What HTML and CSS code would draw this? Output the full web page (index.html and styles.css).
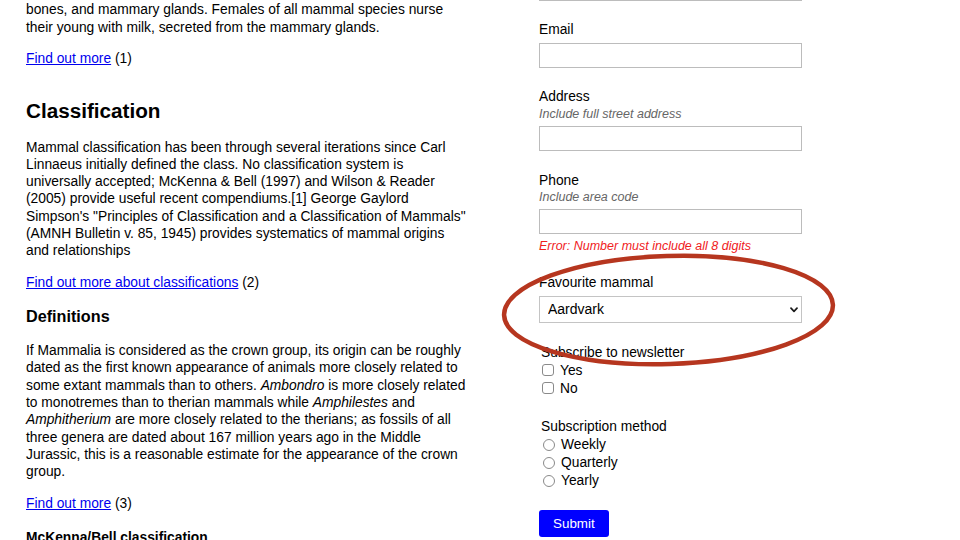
FILE: index.html
```html
<!DOCTYPE html>
<html lang="en">
<head>
<meta charset="utf-8">
<title>Mammals</title>
<link rel="stylesheet" href="styles.css">
</head>
<body>
<div class="page">
  <main class="article">
    <p class="lead"><span class="lead-cut">reptiles and birds by the possession of hair, three middle ear</span>bones, and mammary glands. Females of all mammal species nurse their young with milk, secreted from the mammary glands.</p>
    <p><a href="#">Find out more</a> (1)</p>
    <h2>Classification</h2>
    <p>Mammal classification has been through several iterations since Carl Linnaeus initially defined the class. No classification system is universally accepted; McKenna &amp; Bell (1997) and Wilson &amp; Reader (2005) provide useful recent compendiums.[1] George Gaylord Simpson's "Principles of Classification and a Classification of Mammals" (AMNH Bulletin v. 85, 1945) provides systematics of mammal origins and relationships</p>
    <p><a href="#">Find out more about classifications</a> (2)</p>
    <h3>Definitions</h3>
    <p>If Mammalia is considered as the crown group, its origin can be roughly dated as the first known appearance of animals more closely related to some extant mammals than to others. <em>Ambondro</em> is more closely related to monotremes than to therian mammals while <em>Amphilestes</em> and <em>Amphitherium</em> are more closely related to the therians; as fossils of all three genera are dated about 167 million years ago in the Middle Jurassic, this is a reasonable estimate for the appearance of the crown group.</p>
    <p><a href="#">Find out more</a> (3)</p>
    <h4>McKenna/Bell classification</h4>
  </main>

  <form class="form">
    <div class="field">
      <input class="text-input" type="text" aria-label="Name">
    </div>
    <div class="field">
      <label class="label">Email</label>
      <input class="text-input" type="email">
    </div>
    <div class="field field-address">
      <label class="label">Address</label>
      <span class="hint">Include full street address</span>
      <input class="text-input after-hint" type="text">
    </div>
    <div class="field field-phone">
      <label class="label">Phone</label>
      <span class="hint">Include area code</span>
      <input class="text-input after-hint" type="tel">
      <span class="error">Error: Number must include all 8 digits</span>
    </div>
    <div class="field field-select">
      <label class="label">Favourite mammal</label>
      <div class="select-wrap">
        <select class="select">
          <option>Aardvark</option>
          <option>Badger</option>
          <option>Capybara</option>
        </select>
        <svg class="chevron" width="8" height="6" viewBox="0 0 8 6"><path d="M1 1.2 L4 4.3 L7 1.2" fill="none" stroke="#1a1a1a" stroke-width="1.7" stroke-linecap="round" stroke-linejoin="round"/></svg>
      </div>
    </div>
    <div class="choices">
      <span class="legend">Subscribe to newsletter</span>
      <label class="option"><input class="check" type="checkbox">Yes</label>
      <label class="option"><input class="check" type="checkbox">No</label>
    </div>
    <div class="choices choices-last">
      <span class="legend">Subscription method</span>
      <label class="option"><input class="radio" type="radio" name="m">Weekly</label>
      <label class="option"><input class="radio" type="radio" name="m">Quarterly</label>
      <label class="option"><input class="radio" type="radio" name="m">Yearly</label>
    </div>
    <div class="actions">
      <button class="submit" type="button">Submit</button>
    </div>
  </form>

  <svg class="annotation" width="960" height="540" viewBox="0 0 960 540">
    <ellipse cx="668.5" cy="310" rx="164.5" ry="54" transform="rotate(-1.8 668.5 310)" fill="none" stroke="#b6361f" stroke-width="4.5"/>
  </svg>
</div>
</body>
</html>
```

FILE: styles.css
```css
html, body {
  margin: 0;
  padding: 0;
  background: #fff;
}

body {
  font-family: "Liberation Sans", Arial, Helvetica, sans-serif;
  font-size: 13.8px;
  line-height: 17.3px;
  color: #000;
  overflow: hidden;
}

.page {
  position: relative;
  width: 960px;
  height: 540px;
  overflow: hidden;
  display: grid;
  grid-template-columns: 442px 263px;
  column-gap: 71px;
  padding-left: 26px;
  align-items: start;
}

.article {
  margin-top: -15.95px;
}

.article p {
  margin: 14px 0;
}

.article .lead {
  margin-top: 0;
}

.lead-cut {
  display: block;
  white-space: nowrap;
}

.article a {
  color: #0000ee;
  text-decoration: underline;
}

.article h2 {
  font-size: 20.7px;
  line-height: 26px;
  font-weight: bold;
  margin: 31px 0 14.3px;
}

.article h3 {
  font-size: 16.2px;
  line-height: 20.2px;
  font-weight: bold;
  margin: 15px 0 16px;
}

.article h4 {
  font-size: 13.8px;
  line-height: 17.3px;
  font-weight: bold;
  margin: 17px 0;
}

.form {
  margin: -24px 0 0;
  display: flex;
  flex-direction: column;
}

.field {
  display: flex;
  flex-direction: column;
  margin-bottom: 20px;
}

.field-address {
  margin-bottom: 21px;
}

.field-phone {
  margin-bottom: 18px;
}

.field-select {
  margin-bottom: 21px;
}

.label {
  display: block;
}

.hint {
  display: block;
  font-size: 12.5px;
  font-style: italic;
  color: #666;
}

.text-input {
  box-sizing: border-box;
  width: 263px;
  height: 25px;
  margin: 5px 0 0;
  padding: 0 6px;
  border: 1px solid #bcbcbc;
  border-radius: 0;
  background: #fff;
  font: inherit;
}

.field:first-child .text-input {
  margin-top: 0;
}

.text-input.after-hint {
  margin-top: 3px;
}

.error {
  display: block;
  margin-top: 4px;
  font-size: 12.5px;
  font-style: italic;
  color: #f0211d;
}

.select-wrap {
  position: relative;
  margin-top: 5px;
  width: 263px;
  height: 27px;
}

.select {
  appearance: none;
  -webkit-appearance: none;
  box-sizing: border-box;
  width: 263px;
  height: 27px;
  margin: 0;
  padding: 0 24px 0 8px;
  border: 1px solid #c4c4c4;
  border-radius: 0;
  background: #fff;
  color: #000;
  font: inherit;
  font-size: 14px;
}

.chevron {
  position: absolute;
  right: 4px;
  top: 11px;
  pointer-events: none;
}

.choices {
  display: flex;
  flex-direction: column;
  margin-bottom: 21px;
}

.choices-last {
  margin-bottom: 20px;
}

.legend {
  display: block;
  padding-left: 2px;
}

.option {
  display: flex;
  align-items: center;
  height: 18px;
}

.check {
  appearance: none;
  -webkit-appearance: none;
  box-sizing: border-box;
  width: 12px;
  height: 12px;
  margin: 0 6px 0 3px;
  border: 1px solid #8a8a8a;
  border-radius: 3px;
  background: #fff;
}

.radio {
  appearance: none;
  -webkit-appearance: none;
  box-sizing: border-box;
  width: 12px;
  height: 12px;
  margin: 0 6px 0 4px;
  border: 1px solid #8a8a8a;
  border-radius: 50%;
  background: #fff;
}

.actions {
  display: flex;
}

.submit {
  height: 27px;
  padding: 0 14px;
  border: 0;
  border-radius: 3px;
  background: #0000ff;
  color: #fff;
  font-family: "Liberation Sans", Arial, Helvetica, sans-serif;
  font-size: 13.4px;
}

.annotation {
  position: absolute;
  left: 0;
  top: 0;
  pointer-events: none;
}
```
